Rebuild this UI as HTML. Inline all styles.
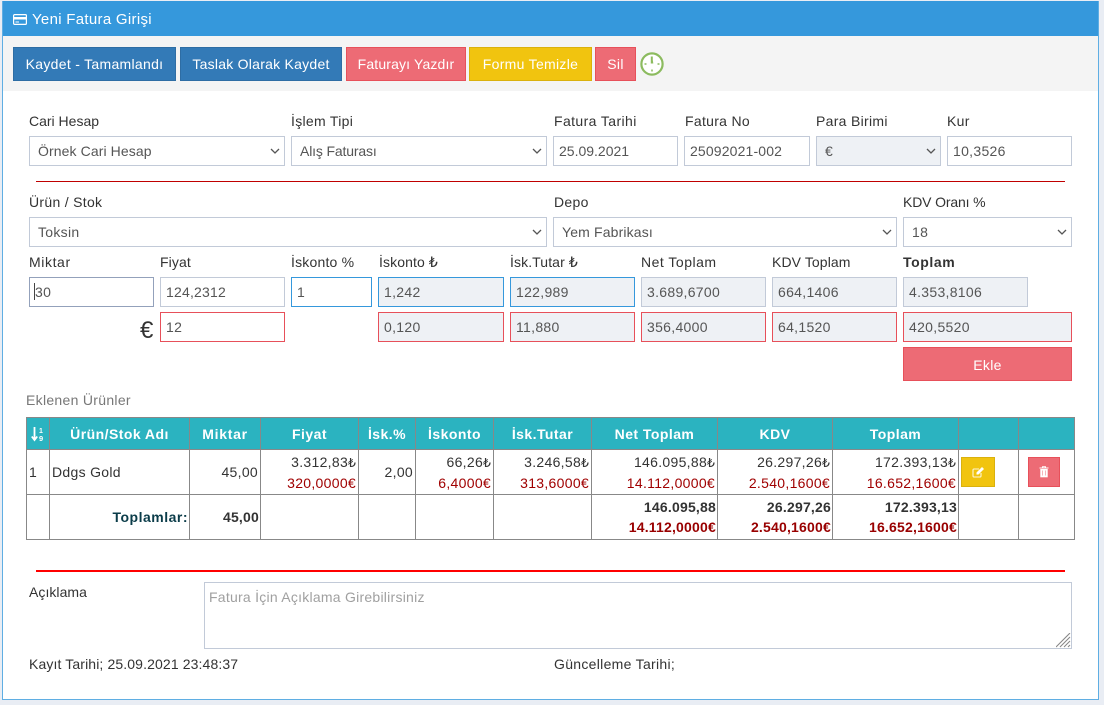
<!DOCTYPE html>
<html lang="tr">
<head>
<meta charset="utf-8">
<title>Yeni Fatura Girişi</title>
<style>
html,body{margin:0;padding:0;width:1104px;height:705px;overflow:hidden;background:#e9edf4}
body{font-family:"Liberation Sans","DejaVu Sans",sans-serif;font-size:14px;color:#333;letter-spacing:.3px;position:relative}
#panel{position:absolute;left:2px;top:1px;width:1095px;height:698px;background:#fff;border:1px solid #5faee3;border-top:0}
.abs,.l,.f,.b,.c{position:absolute;box-sizing:border-box}
#head{left:3px;top:1px;width:1095px;height:35px;background:#3598dc;color:#fff;font-size:15px;line-height:37px;padding-left:29px}
#bar{left:3px;top:36px;width:1095px;height:55px;background:#f4f4f4}
.b{top:47px;height:34px;line-height:32px;text-align:center;color:#fff;border:1px solid;font-size:14px}
.blue{background:#337ab7;border-color:#2e6da4}
.red{background:#ed6b75;border-color:#e7505a}
.yel{background:#f1c40f;border-color:#dab10d}
.l{line-height:20px;white-space:nowrap}
.f{height:30px;border:1px solid #c2cad8;background:#fff;color:#555;font:14px "Liberation Sans","DejaVu Sans",sans-serif;letter-spacing:.3px;padding:0 5px;margin:0;border-radius:0;outline:0}
select.f{padding:0 8px;appearance:none;-webkit-appearance:none}
select.d{background:#eef1f5}
.d{background:#eef1f5}
.bb{border-color:#3598dc}
.rb{border-color:#e7505a}
.c{width:10px;height:6px}
table{position:absolute;left:26px;top:417px;width:1048px;border-collapse:collapse;table-layout:fixed;font-size:14px}
td,th{border:1px solid #888;padding:0 2px;overflow:hidden;white-space:nowrap}
th{background:#2bb3c0;color:#fff;font-weight:bold;text-align:center;height:31px;padding:0;letter-spacing:.45px}
.n{text-align:right;line-height:20px}
.n i{font-style:normal;color:#a00000;display:block}
.n b{font-weight:normal;font-size:12.500px;letter-spacing:0}
.t{font-weight:bold;line-height:20px;text-align:right;letter-spacing:.2px;padding-right:1px}
.t i{font-style:normal;color:#900;display:block}
textarea.f{height:67px;padding:6px 4px;resize:none;display:block;letter-spacing:.25px}
textarea::placeholder{color:#a0a0a0;opacity:1}
</style>
</head>
<body>
<div id="panel"></div>
<div id="head" class="abs">Yeni Fatura Girişi</div>
<svg class="abs" style="left:13px;top:14px" width="14" height="11" viewBox="0 0 14 11"><rect x=".6" y=".6" width="12.8" height="9.800" rx="1" fill="none" stroke="#fff" stroke-width="1.200"/><rect x="1" y="3" width="12" height="2.500" fill="#fff"/><rect x="2.500" y="7.500" width="3.500" height="1" fill="#fff"/></svg>
<div id="bar" class="abs"></div>

<div class="b blue" style="left:13px;width:163px">Kaydet - Tamamlandı</div>
<div class="b blue" style="left:180px;width:162px;letter-spacing:.25px">Taslak Olarak Kaydet</div>
<div class="b red" style="left:346px;width:120px;letter-spacing:.15px">Faturayı Yazdır</div>
<div class="b yel" style="left:469px;width:123px">Formu Temizle</div>
<div class="b red" style="left:595px;width:41px">Sil</div>
<svg class="abs" style="left:640px;top:52px" width="24" height="24" viewBox="0 0 24 24"><circle cx="12" cy="12" r="10.600" fill="#fff" stroke="#8cbb5f" stroke-width="2.200"/><path d="M12 17.500V19.500M4.500 12h2M17.500 12h2" stroke="#8cbb5f" stroke-width="1.500"/><path d="M10.800 4.500h2v3.500l.5 3.500h-2.500z" fill="#8cbb5f"/></svg>

<div class="l" style="left:29px;top:111px;letter-spacing:0">Cari Hesap</div>
<div class="l" style="left:291px;top:111px">İşlem Tipi</div>
<div class="l" style="left:554px;top:111px;letter-spacing:.4px">Fatura Tarihi</div>
<div class="l" style="left:685px;top:111px">Fatura No</div>
<div class="l" style="left:816px;top:111px">Para Birimi</div>
<div class="l" style="left:947px;top:111px">Kur</div>

<select class="f" style="left:29px;top:136px;width:256px;letter-spacing:.1px"><option>Örnek Cari Hesap</option></select>
<select class="f" style="left:291px;top:136px;width:256px;letter-spacing:-.15px"><option>Alış Faturası</option></select>
<input class="f" style="left:553px;top:136px;width:125px;letter-spacing:0" value="25.09.2021">
<input class="f" style="left:684px;top:136px;width:126px;letter-spacing:.15px" value="25092021-002">
<select class="f d" style="left:816px;top:136px;width:125px"><option>€</option></select>
<input class="f" style="left:947px;top:136px;width:125px" value="10,3526">

<div class="abs" style="left:36px;top:181px;width:1029px;height:1px;background:#c00000"></div>

<div class="l" style="left:29px;top:192px">Ürün / Stok</div>
<div class="l" style="left:554px;top:192px">Depo</div>
<div class="l" style="left:903px;top:192px;letter-spacing:-.15px">KDV Oranı %</div>
<select class="f" style="left:29px;top:217px;width:518px"><option>Toksin</option></select>
<select class="f" style="left:553px;top:217px;width:344px;letter-spacing:.15px"><option>Yem Fabrikası</option></select>
<select class="f" style="left:903px;top:217px;width:169px"><option>18</option></select>

<svg class="c" style="left:270px;top:148px" viewBox="0 0 10 6"><path d="M1 1l4 4 4-4" fill="none" stroke="#555" stroke-width="1.300"/></svg>
<svg class="c" style="left:532px;top:148px" viewBox="0 0 10 6"><path d="M1 1l4 4 4-4" fill="none" stroke="#555" stroke-width="1.300"/></svg>
<svg class="c" style="left:926px;top:148px" viewBox="0 0 10 6"><path d="M1 1l4 4 4-4" fill="none" stroke="#555" stroke-width="1.300"/></svg>
<svg class="c" style="left:532px;top:229px" viewBox="0 0 10 6"><path d="M1 1l4 4 4-4" fill="none" stroke="#555" stroke-width="1.300"/></svg>
<svg class="c" style="left:882px;top:229px" viewBox="0 0 10 6"><path d="M1 1l4 4 4-4" fill="none" stroke="#555" stroke-width="1.300"/></svg>
<svg class="c" style="left:1057px;top:229px" viewBox="0 0 10 6"><path d="M1 1l4 4 4-4" fill="none" stroke="#555" stroke-width="1.300"/></svg>

<div class="l" style="left:29px;top:252px;letter-spacing:.6px">Miktar</div>
<div class="l" style="left:160px;top:252px;letter-spacing:.1px">Fiyat</div>
<div class="l" style="left:291px;top:252px;letter-spacing:.2px">İskonto %</div>
<div class="l" style="left:379px;top:252px;letter-spacing:.1px">İskonto ₺</div>
<div class="l" style="left:510px;top:252px;letter-spacing:.1px">İsk.Tutar ₺</div>
<div class="l" style="left:641px;top:252px;letter-spacing:.5px">Net Toplam</div>
<div class="l" style="left:772px;top:252px;letter-spacing:.1px">KDV Toplam</div>
<div class="l" style="left:903px;top:252px;font-weight:bold;letter-spacing:.6px">Toplam</div>

<input class="f" style="left:29px;top:277px;width:125px;border-color:#93a1bb" value="30">
<div class="abs" style="left:34px;top:283px;width:1px;height:17px;background:#444"></div>
<input class="f" style="left:160px;top:277px;width:125px;letter-spacing:.2px" value="124,2312">
<input class="f bb" style="left:291px;top:277px;width:81px" value="1">
<input class="f d bb" style="left:378px;top:277px;width:126px" value="1,242">
<input class="f d bb" style="left:510px;top:277px;width:125px" value="122,989">
<input class="f d" style="left:641px;top:277px;width:125px" value="3.689,6700">
<input class="f d" style="left:772px;top:277px;width:125px" value="664,1406">
<input class="f d" style="left:903px;top:277px;width:125px" value="4.353,8106">

<div class="l" style="left:140px;top:321px;font-size:24px;letter-spacing:0">€</div>
<input class="f rb" style="left:160px;top:312px;width:125px" value="12">
<input class="f d rb" style="left:378px;top:312px;width:126px" value="0,120">
<input class="f d rb" style="left:510px;top:312px;width:125px" value="11,880">
<input class="f d rb" style="left:641px;top:312px;width:125px" value="356,4000">
<input class="f d rb" style="left:772px;top:312px;width:125px" value="64,1520">
<input class="f d rb" style="left:903px;top:312px;width:169px" value="420,5520">
<div class="b red" style="left:903px;top:347px;width:169px;line-height:34px">Ekle</div>

<div class="l" style="left:26px;top:390px;color:#777">Eklenen Ürünler</div>

<table>
<colgroup><col style="width:23px"><col style="width:140px"><col style="width:71px"><col style="width:98px"><col style="width:57px"><col style="width:78px"><col style="width:98px"><col style="width:126px"><col style="width:115px"><col style="width:126px"><col style="width:60px"><col style="width:56px"></colgroup>
<tr><th></th><th>Ürün/Stok Adı</th><th style="letter-spacing:.7px">Miktar</th><th>Fiyat</th><th>İsk.%</th><th>İskonto</th><th>İsk.Tutar</th><th>Net Toplam</th><th>KDV</th><th>Toplam</th><th></th><th></th></tr>
<tr style="height:45px"><td>1</td><td>Ddgs Gold</td><td class="n">45,00</td><td class="n">3.312,83<b>₺</b><i>320,0000€</i></td><td class="n">2,00</td><td class="n">66,26<b>₺</b><i>6,4000€</i></td><td class="n">3.246,58<b>₺</b><i>313,6000€</i></td><td class="n">146.095,88<b>₺</b><i>14.112,0000€</i></td><td class="n">26.297,26<b>₺</b><i>2.540,1600€</i></td><td class="n">172.393,13<b>₺</b><i>16.652,1600€</i></td><td></td><td></td></tr>
<tr style="height:45px"><td></td><td class="t" style="color:#0b3c49;letter-spacing:.5px">Toplamlar:</td><td class="t">45,00</td><td></td><td></td><td></td><td></td><td class="t">146.095,88<i>14.112,0000€</i></td><td class="t">26.297,26<i>2.540,1600€</i></td><td class="t">172.393,13<i>16.652,1600€</i></td><td></td><td></td></tr>
</table>

<svg class="abs" style="left:31px;top:426px" width="15" height="16" viewBox="0 0 15 16"><path d="M3.500 1v12M.8 10.500l2.700 3.500 2.700-3.500" fill="none" stroke="#fff" stroke-width="1.800"/><text x="8" y="7" font-size="7" font-weight="bold" fill="#fff" font-family="Liberation Sans">1</text><text x="8" y="15" font-size="7.500" font-weight="bold" fill="#fff" font-family="Liberation Sans">9</text></svg>

<div class="b yel" style="left:961px;top:457px;width:34px;height:30px"></div>
<svg class="abs" style="left:972px;top:466px" width="13" height="12" viewBox="0 0 13 12"><path d="M9 7v3a1 1 0 0 1-1 1H2a1 1 0 0 1-1-1V4a1 1 0 0 1 1-1h5" fill="none" stroke="#fff" stroke-width="1.100" opacity=".85"/><path d="M4.500 6.500L10 1l2 2-5.500 5.500H4.500z" fill="#fff"/></svg>
<div class="b red" style="left:1028px;top:457px;width:32px;height:30px"></div>
<svg class="abs" style="left:1039px;top:466px" width="10" height="12" viewBox="0 0 10 12"><path d="M.5 2h9M3.500 2V.7h3V2" stroke="#fff" fill="none"/><path d="M1.300 3h7.400v8.300H1.300z" fill="#fff"/><path d="M3.500 4.500v5M6.500 4.500v5" stroke="#f5b5ba"/></svg>

<div class="abs" style="left:36px;top:570px;width:1029px;height:2px;background:#f00"></div>
<div class="l" style="left:29px;top:582px;letter-spacing:.05px">Açıklama</div>
<textarea class="f" style="left:204px;top:582px;width:868px" placeholder="Fatura İçin Açıklama Girebilirsiniz"></textarea>
<svg class="abs" style="left:1056px;top:633px" width="15" height="15" viewBox="0 0 15 15"><path d="M0 14L14 0M4 14L14 4M8 14l6-6M12 14l2-2" stroke="#888" stroke-width="1.100" fill="none"/></svg>
<div class="l" style="left:29px;top:654px;letter-spacing:.12px">Kayıt Tarihi; 25.09.2021 23:48:37</div>
<div class="l" style="left:554px;top:654px">Güncelleme Tarihi;</div>
</body>
</html>
